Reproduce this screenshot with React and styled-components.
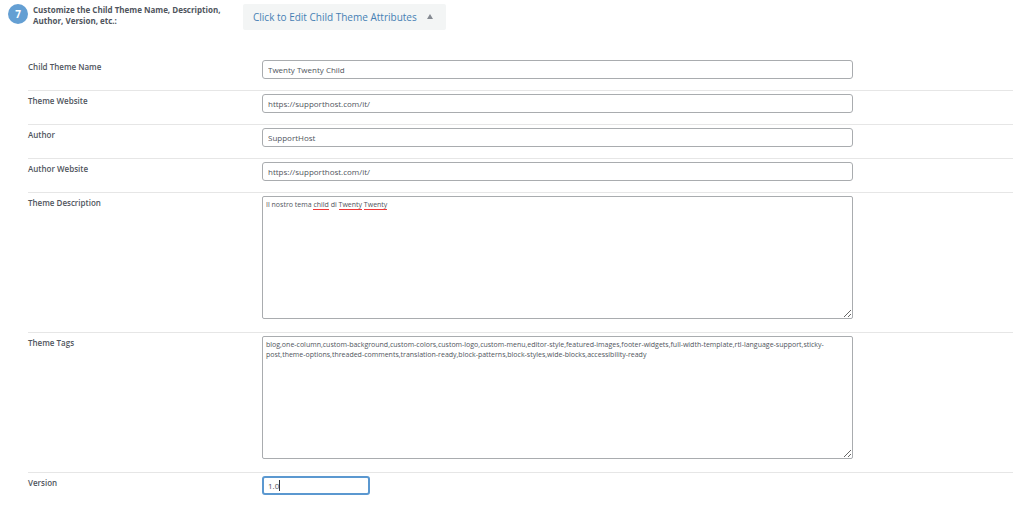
import { useState } from 'react';
import styled, { createGlobalStyle } from 'styled-components';

const GlobalStyle = createGlobalStyle`
    * {
        box-sizing: border-box;
    }

    body {
        margin: 0;
        background: #ffffff;
        color: #50555d;
        font-family: "Open Sans", "Noto Sans", sans-serif;
        font-size: 8px;
    }
`;

const Header = styled.header`
    display: flex;
    align-items: flex-start;
    height: 57px;
    padding: 4px 8px 0;
`;

const Step = styled.span`
    flex: none;
    width: 20px;
    height: 20px;
    margin-right: 5px;
    border-radius: 50%;
    background: #649fd3;
    color: #ffffff;
    font-size: 10px;
    font-weight: 700;
    line-height: 20px;
    text-align: center;
`;

const Title = styled.h1`
    flex: none;
    width: 210px;
    margin: 0;
    padding-right: 20px;
    font-size: 8px;
    font-weight: 700;
    line-height: 11px;
`;

const Toggle = styled.button`
    display: flex;
    align-items: center;
    gap: 10px;
    height: 26px;
    padding: 0 13px 1px 10px;
    border: 0;
    border-radius: 2px;
    background: #f3f5f5;
    color: #4680b4;
    font-family: inherit;
    font-size: 10px;
    cursor: pointer;
`;

const Arrow = styled.svg`
    width: 6px;
    height: 5px;
    fill: #858a92;
`;

const Fields = styled.form`
    padding: 0 11px 0 28px;
`;

const Row = styled.div`
    display: flex;
    align-items: flex-start;
    padding: 3px 0 11px;

    & + & {
        border-top: 1px solid #e6e6e6;
    }
`;

const Label = styled.label`
    flex: none;
    width: 234px;
    line-height: 13px;
    font-size: 8px;
    font-weight: 600;
`;

const Control = styled.div`
    position: relative;
    flex: none;
    display: flex;
    width: ${(props) => (props.$short ? '11%' : '60%')};
`;

const Input = styled.input`
    width: 100%;
    height: 19px;
    padding: 0 5px;
    border: 1px solid #a9acaf;
    border-radius: 3px;
    outline: 0;
    background: #ffffff;
    color: #50555d;
    font-family: inherit;
    font-size: 8px;

    &:focus {
        padding: 0 4px;
        border: 2px solid #5b98d0;
        caret-color: transparent;
    }
`;

const TextArea = styled.textarea`
    width: 100%;
    height: 123px;
    margin-bottom: 2px;
    padding: 3px;
    border: 1px solid #a9acaf;
    border-radius: 2px;
    outline: 0;
    background: #ffffff;
    color: #50555d;
    font-family: inherit;
    font-size: 7px;
    line-height: 10px;
    resize: vertical;
`;

// sits over the textarea and only shows the red lines
const Spelling = styled.div`
    position: absolute;
    inset: 0;
    padding: 4px;
    color: transparent;
    font-size: 7px;
    line-height: 10px;
    pointer-events: none;

    u {
        border-bottom: 1px solid #f03838;
        text-decoration: none;
    }
`;

const Caret = styled.span`
    position: absolute;
    top: 4px;
    left: 17px;
    width: 1px;
    height: 11px;
    background: #30343a;
`;

const textFields = [
    { id: 'name', label: 'Child Theme Name', value: 'Twenty Twenty Child' },
    { id: 'website', label: 'Theme Website', value: 'https://supporthost.com/it/' },
    { id: 'author', label: 'Author', value: 'SupportHost' },
    { id: 'authorWebsite', label: 'Author Website', value: 'https://supporthost.com/it/' },
];

const tags = 'blog,one-column,custom-background,custom-colors,custom-logo,custom-menu,editor-style,featured-images,footer-widgets,full-width-template,rtl-language-support,sticky-post,theme-options,threaded-comments,translation-ready,block-patterns,block-styles,wide-blocks,accessibility-ready';

function App() {
    const [open, setOpen] = useState(true);
    const [description, setDescription] = useState('Il nostro tema child di Twenty Twenty');
    const [version, setVersion] = useState('1.0');

    return (
        <>
            <GlobalStyle />
            <Header>
                <Step>7</Step>
                <Title>Customize the Child Theme Name, Description, Author, Version, etc.:</Title>
                <Toggle type="button" aria-expanded={open} onClick={() => setOpen(!open)}>
                    Click to Edit Child Theme Attributes
                    <Arrow viewBox="0 0 6 5" aria-hidden="true">
                        <path d="M3 0 6 5H0z" />
                    </Arrow>
                </Toggle>
            </Header>
            {open && (
                <Fields>
                    {textFields.map((field) => (
                        <Row key={field.id}>
                            <Label htmlFor={field.id}>{field.label}</Label>
                            <Control>
                                <Input id={field.id} type="text" defaultValue={field.value} />
                            </Control>
                        </Row>
                    ))}
                    <Row>
                        <Label htmlFor="description">Theme Description</Label>
                        <Control>
                            <TextArea
                                id="description"
                                spellCheck={false}
                                value={description}
                                onChange={(e) => setDescription(e.target.value)}
                            />
                            <Spelling aria-hidden="true">
                                {description.split(/(child|Twenty)/).map((part, i) => (
                                    i % 2 ? <u key={i}>{part}</u> : part
                                ))}
                            </Spelling>
                        </Control>
                    </Row>
                    <Row>
                        <Label htmlFor="tags">Theme Tags</Label>
                        <Control>
                            <TextArea id="tags" spellCheck={false} defaultValue={tags} />
                        </Control>
                    </Row>
                    <Row>
                        <Label htmlFor="version">Version</Label>
                        <Control $short>
                            <Input
                                id="version"
                                type="text"
                                autoFocus
                                value={version}
                                onChange={(e) => setVersion(e.target.value)}
                            />
                            {version === '1.0' && <Caret />}
                        </Control>
                    </Row>
                </Fields>
            )}
        </>
    );
}

export default App;
